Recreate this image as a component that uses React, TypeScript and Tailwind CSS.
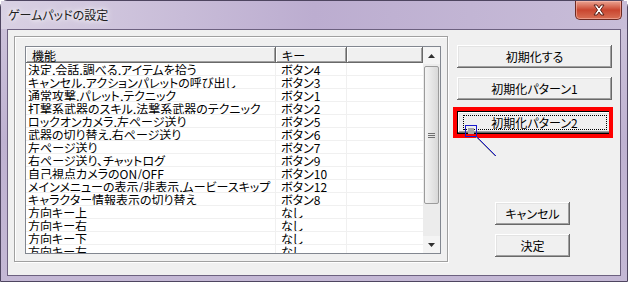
import React from "react";

const rows: [string, string][] = [
  ["決定,会話,調べる,アイテムを拾う", "ボタン4"],
  ["キャンセル,アクションパレットの呼び出し", "ボタン3"],
  ["通常攻撃,パレット,テクニック", "ボタン1"],
  ["打撃系武器のスキル,法撃系武器のテクニック", "ボタン2"],
  ["ロックオンカメラ,左ページ送り", "ボタン5"],
  ["武器の切り替え,右ページ送り", "ボタン6"],
  ["左ページ送り", "ボタン7"],
  ["右ページ送り、チャットログ", "ボタン9"],
  ["自己視点カメラのON/OFF", "ボタン10"],
  ["メインメニューの表示/非表示,ムービースキップ", "ボタン12"],
  ["キャラクター情報表示の切り替え", "ボタン8"],
  ["方向キー上", "なし"],
  ["方向キー右", "なし"],
  ["方向キー下", "なし"],
  ["方向キー左", "なし"],
];

const btn =
  "flex items-center justify-center h-[23px] bg-[#f0f0f0] text-black text-[12px] shadow-[inset_-1px_-1px_0_#696969,inset_1px_1px_0_#ffffff,inset_-2px_-2px_0_#a0a0a0,inset_2px_2px_0_#e3e3e3]";

const hdr =
  "h-[16px] flex items-center bg-[#f0f0f0] pl-[6px] text-[12px] leading-[13px] shadow-[inset_-1px_-1px_0_#696969,inset_1px_1px_0_#ffffff,inset_-2px_-2px_0_#a0a0a0]";

export default function App() {
  return (
    <div className="relative w-[628px] h-[282px] overflow-hidden bg-white font-['Noto_Sans_CJK_JP',sans-serif] [font-feature-settings:'palt']">
      <div className="w-[628px] h-[282px] flex flex-col rounded-t-[7px] border border-[#4e4560] bg-gradient-to-b from-[#cfc5dc] via-[#bfb2d1] to-[#c4b8d5]">
        {/* title bar */}
        <div className="h-[28px] flex items-start justify-between bg-gradient-to-r from-[#d9d1e3] via-[#bcadd0] to-[#c8bdd8]">
          <div className="pl-[7px] pt-[6px] text-[12px] leading-[16px] text-[#202020] [text-shadow:0_0_4px_#ffffff,0_0_8px_#ffffff]">
            ゲームパッドの設定
          </div>
          <div className="mr-[5px] w-[47px] h-[19px] flex items-center justify-center rounded-b-[5px] border border-t-0 border-[#6e2a22] bg-gradient-to-b from-[#e9a392] via-[#c9452f] to-[#d86f55] shadow-[inset_0_0_0_1px_rgba(255,200,190,0.5)]">
            <svg width="14" height="12" viewBox="0 0 14 12">
              <path
                d="M2 1 L5 1 L7 4 L9 1 L12 1 L8.5 6 L12 11 L9 11 L7 8 L5 11 L2 11 L5.5 6 Z"
                fill="#ffffff"
                stroke="#5a2019"
                strokeWidth="1"
              />
            </svg>
          </div>
        </div>
        {/* client area */}
        <div className="mx-[6px] h-[247px] border border-[#6d6180] bg-[#f0f0f0] flex">
          {/* panel */}
          <div className="ml-[6px] mt-[6px] w-[434px] h-[226px] border border-[#a0a0a0] shadow-[1px_1px_0_#ffffff,inset_1px_1px_0_#ffffff] pl-[10px] pt-[9px]">
            <div className="w-[416px] h-[208px] border border-[#828790] bg-white flex text-[12px] leading-[13px] text-black">
              <div className="w-[397px] h-[206px] overflow-hidden flex flex-col">
                <div className="flex">
                  <div className={`${hdr} w-[250px]`}>機能</div>
                  <div className={`${hdr} w-[71px]`}>キー</div>
                  <div className={`${hdr} w-[76px]`}></div>
                </div>
                {rows.map(([a, b]) => (
                  <div key={a} className="flex h-[13px] shrink-0">
                    <div className="w-[250px] h-[13px] pl-[2px] border-b border-r border-[#f0f0f0] whitespace-nowrap overflow-hidden">
                      {a}
                    </div>
                    <div className="w-[71px] h-[13px] pl-[5px] border-b border-r border-[#f0f0f0] whitespace-nowrap overflow-hidden">
                      {b}
                    </div>
                    <div className="w-[76px] h-[13px] border-b border-[#f0f0f0]"></div>
                  </div>
                ))}
              </div>
              {/* scrollbar */}
              <div className="w-[17px] h-[206px] flex flex-col bg-[#ececec]">
                <div className="h-[17px] flex items-center justify-center bg-[#f4f4f4]">
                  <svg width="7" height="4" viewBox="0 0 7 4">
                    <path d="M3.5 0 L7 4 L0 4 Z" fill="#303030" />
                  </svg>
                </div>
                <div className="mt-[2px] mx-[1px] h-[138px] rounded-[2px] border border-[#9b9b9b] bg-gradient-to-r from-[#f4f4f4] via-[#e6e6e6] to-[#d8d8d8] flex items-center justify-center">
                  <div className="flex flex-col gap-[1px]">
                    <div className="w-[7px] h-[1px] bg-[#707070]" />
                    <div className="w-[7px] h-[1px] bg-[#707070]" />
                    <div className="w-[7px] h-[1px] bg-[#707070]" />
                  </div>
                </div>
                <div className="flex-1" />
                <div className="h-[17px] flex items-center justify-center bg-[#f4f4f4]">
                  <svg width="7" height="4" viewBox="0 0 7 4">
                    <path d="M0 0 L7 0 L3.5 4 Z" fill="#303030" />
                  </svg>
                </div>
              </div>
            </div>
          </div>
          {/* buttons */}
          <div className="ml-[9px] mt-[15px] w-[155px] flex flex-col">
            <div className={btn}>初期化する</div>
            <div className={`${btn} mt-[9px]`}>初期化パターン1</div>
            <div className="relative mt-[11px]">
              <div className={`${btn} border border-black`}>
                <div className="border border-dotted border-black w-[144px] h-[15px] flex items-center justify-center">
                  初期化パターン2
                </div>
              </div>
              <div className="absolute -left-[4px] -top-[4px] w-[160px] h-[31px] border-4 border-[#ff0000]" />
            </div>
            <div className={`${btn} mt-[68px] ml-[38px] w-[75px]`}>キャンセル</div>
            <div className={`${btn} mt-[9px] ml-[38px] w-[75px]`}>決定</div>
          </div>
        </div>
      </div>
      {/* cursor overlay */}
      <svg className="absolute left-[462px] top-[123px]" width="40" height="40" viewBox="0 0 40 40">
        <line x1="14" y1="14" x2="33" y2="33" stroke="#9a9a9a" strokeWidth="1" />
        <line x1="15" y1="14" x2="34" y2="33" stroke="#1a1acc" strokeWidth="1" />
        <rect x="3.5" y="2.5" width="11" height="11" fill="none" stroke="#1a1acc" strokeWidth="1" />
        <rect x="6" y="5" width="6" height="6" fill="#a8a8a8" />
      </svg>
    </div>
  );
}
